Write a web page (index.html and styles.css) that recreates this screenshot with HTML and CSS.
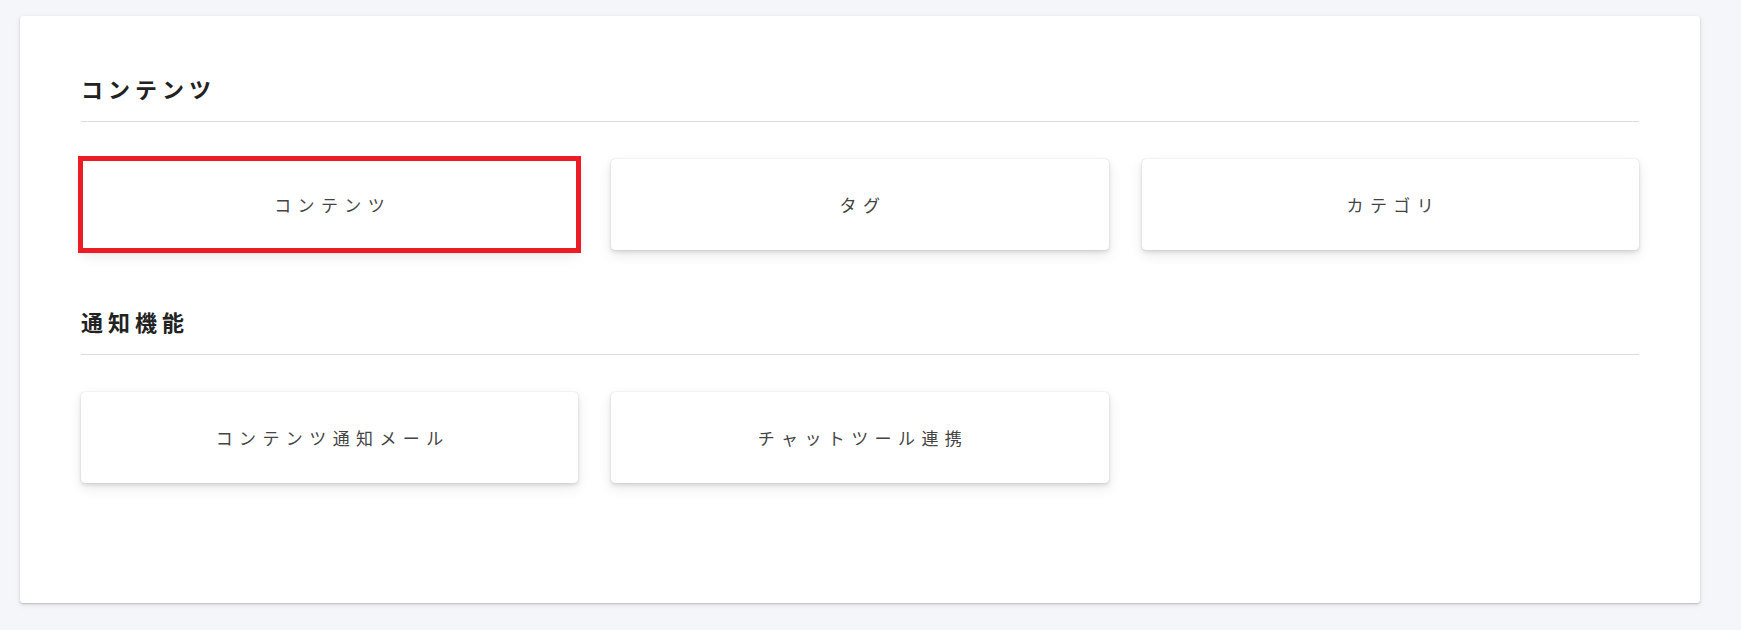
FILE: index.html
```html
<!DOCTYPE html>
<html lang="ja">
<head>
<meta charset="utf-8">
<title>設定</title>
<link rel="stylesheet" href="styles.css">
</head>
<body>
  <main class="panel">
    <section class="section">
      <h2 class="section-title">コンテンツ</h2>
      <div class="grid">
        <a class="tile tile-active" href="#">コンテンツ</a>
        <a class="tile" href="#">タグ</a>
        <a class="tile" href="#">カテゴリ</a>
      </div>
    </section>
    <section class="section">
      <h2 class="section-title">通知機能</h2>
      <div class="grid">
        <a class="tile" href="#">コンテンツ通知メール</a>
        <a class="tile" href="#">チャットツール連携</a>
      </div>
    </section>
  </main>
</body>
</html>
```

FILE: styles.css
```css
html, body {
  margin: 0;
  padding: 0;
}

body {
  background: #f5f6fa;
  font-family: "Noto Sans CJK JP", "Noto Sans", sans-serif;
  padding: 16px 0 0 20px;
  height: 630px;
  box-sizing: border-box;
  overflow: hidden;
}

.panel {
  width: 1680px;
  height: 587px;
  box-sizing: border-box;
  background: #ffffff;
  border-radius: 3px;
  box-shadow: 0 1px 2px rgba(0, 0, 0, 0.2), 0 2px 6px rgba(0, 0, 0, 0.08);
  padding: 0 61px;
}

.section {
  padding-top: 56px;
}

.section + .section {
  padding-top: 55px;
}

.section-title {
  margin: 0;
  font-size: 22px;
  line-height: 32px;
  font-weight: 700;
  letter-spacing: 5px;
  color: #222222;
  padding-bottom: 17px;
  border-bottom: 1px solid #dcdcdc;
}

.grid {
  display: grid;
  grid-template-columns: repeat(3, 1fr);
  column-gap: 33px;
  margin-top: 37px;
}

.tile {
  display: flex;
  align-items: center;
  justify-content: center;
  height: 91px;
  background: #ffffff;
  border-radius: 4px;
  box-shadow: 0 0 1px rgba(0, 0, 0, 0.22), 0 2px 4px rgba(0, 0, 0, 0.12), 0 5px 14px rgba(0, 0, 0, 0.09);
  color: #444444;
  text-decoration: none;
  font-size: 17px;
  letter-spacing: 6.4px;
  padding-left: 6px;
}

.tile-active {
  outline: 5px solid #ec1c24;
  outline-offset: -2px;
  border-radius: 0;
}
```
